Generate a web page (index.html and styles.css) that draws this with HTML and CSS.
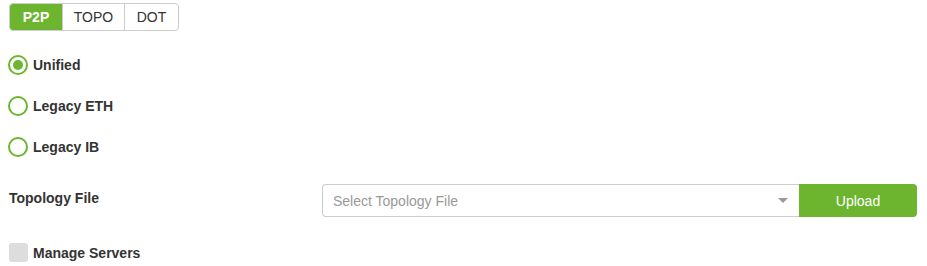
FILE: index.html
```html
<!DOCTYPE html>
<html>
<head>
<meta charset="utf-8">
<link rel="stylesheet" href="styles.css">
</head>
<body>
<div class="page">
  <div class="tabs">
    <div class="tab active">P2P</div>
    <div class="tab">TOPO</div>
    <div class="tab">DOT</div>
  </div>
  <div class="radios">
    <div class="radio-row"><span class="radio checked"></span><span class="label">Unified</span></div>
    <div class="radio-row"><span class="radio"></span><span class="label">Legacy ETH</span></div>
    <div class="radio-row"><span class="radio"></span><span class="label">Legacy IB</span></div>
  </div>
  <div class="file-row">
    <div class="label file-label">Topology File</div>
    <div class="select">
      <span class="placeholder">Select Topology File</span>
      <span class="arrow"></span>
    </div>
    <div class="upload">Upload</div>
  </div>
  <div class="check-row"><span class="checkbox"></span><span class="label">Manage Servers</span></div>
</div>
</body>
</html>
```
FILE: styles.css
```css
html, body {
  margin: 0;
  padding: 0;
  background: #fff;
}
body {
  font-family: "Liberation Sans", Arial, sans-serif;
  color: #333;
  font-size: 14px;
}
.page {
  padding: 3px 0 0 9px;
  width: 908px;
}
.tabs {
  display: inline-flex;
  border: 1px solid #ccc;
  border-radius: 4px;
  height: 26px;
  overflow: hidden;
}
.tab {
  display: flex;
  align-items: center;
  justify-content: center;
  font-size: 14px;
  color: #333;
  border-left: 1px solid #ccc;
  width: 53px;
}
.tab:first-child {
  border-left: none;
  width: 52px;
}
.tab:nth-child(2) {
  width: 61px;
}
.tab.active {
  background: #6db52f;
  color: #fff;
  font-weight: bold;
}
.radios {
  display: flex;
  flex-direction: column;
  margin-top: 24px;
  margin-left: -1px;
  gap: 21px;
}
.radio-row {
  display: flex;
  align-items: center;
  height: 20px;
}
.radio {
  box-sizing: border-box;
  width: 20px;
  height: 20px;
  border: 2px solid #6db52f;
  border-radius: 50%;
  display: flex;
  align-items: center;
  justify-content: center;
  margin-right: 5px;
}
.radio.checked::after {
  content: "";
  width: 10px;
  height: 10px;
  border-radius: 50%;
  background: #6db52f;
}
.label {
  font-weight: bold;
  font-size: 14px;
  color: #333;
}
.file-row {
  display: flex;
  align-items: center;
  margin-top: 27px;
  height: 33px;
}
.file-label {
  width: 313px;
  margin-top: -5px;
}
.select {
  box-sizing: border-box;
  height: 33px;
  width: 477px;
  border: 1px solid #ccc;
  border-right: none;
  border-radius: 4px 0 0 4px;
  display: flex;
  align-items: center;
  justify-content: space-between;
  padding: 0 11px 0 10px;
}
.placeholder {
  color: #999;
  font-size: 14px;
}
.arrow {
  width: 0;
  height: 0;
  border-left: 5px solid transparent;
  border-right: 5px solid transparent;
  border-top: 5px solid #999;
}
.upload {
  width: 118px;
  height: 33px;
  background: #6db52f;
  color: #fff;
  font-size: 14px;
  border-radius: 0 4px 4px 0;
  display: flex;
  align-items: center;
  justify-content: center;
}
.check-row {
  display: flex;
  align-items: center;
  margin-top: 26px;
  height: 19px;
}
.checkbox {
  width: 19px;
  height: 19px;
  background: #ddd;
  border-radius: 3px;
  margin-right: 5px;
}
```
